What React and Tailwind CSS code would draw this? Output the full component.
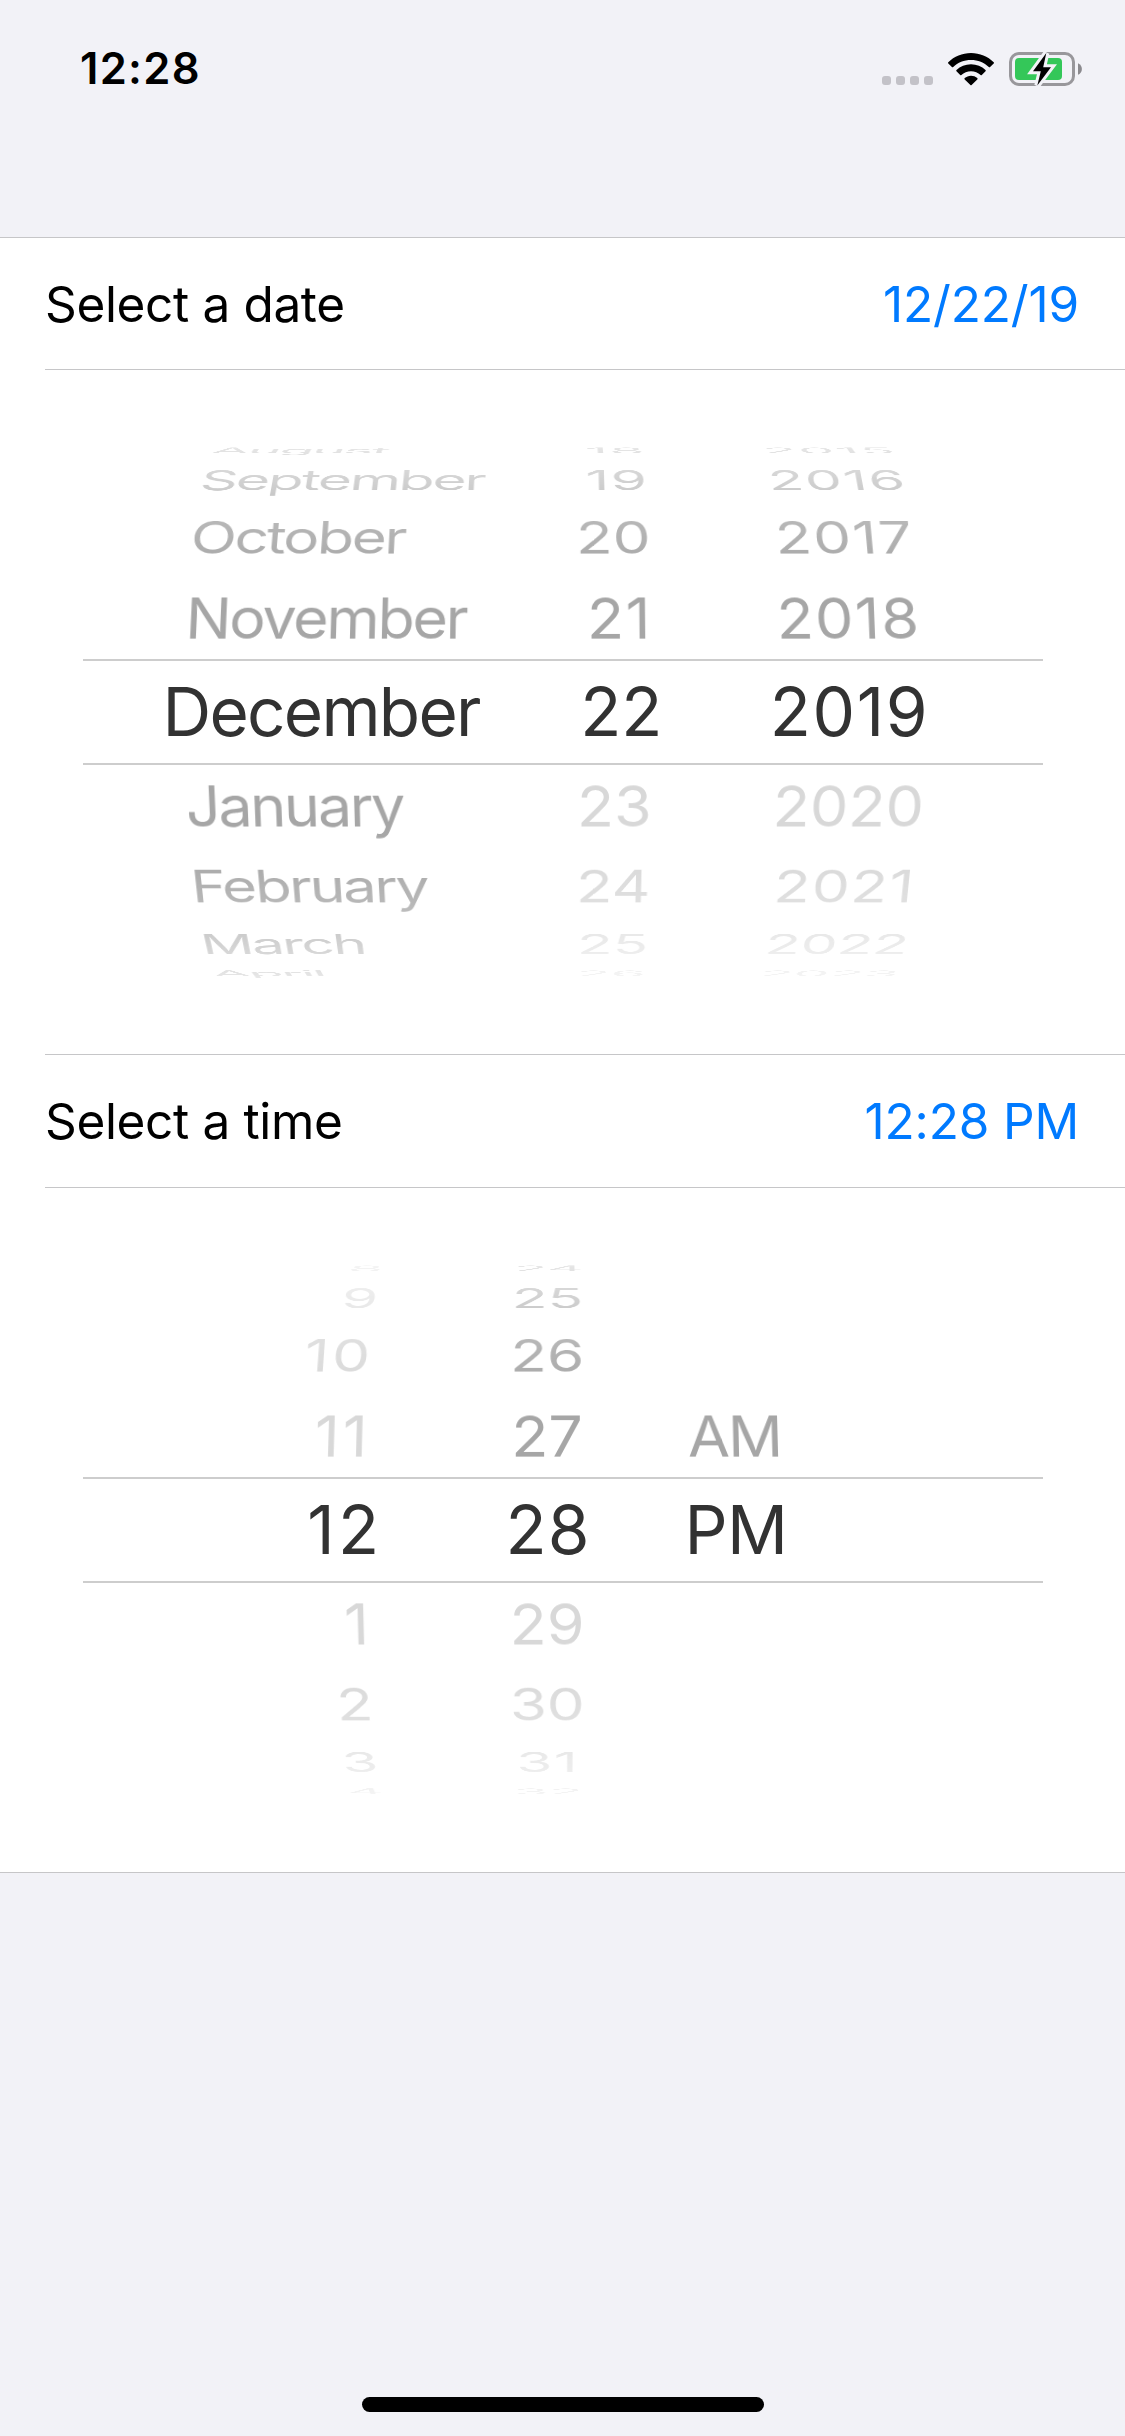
const DATE_COLUMNS = {
  idle: [
    "w-[400px] pl-[102px] text-left tracking-[-0.037em]",
    "w-[169px] text-right",
    "w-[394px] text-center",
  ],
  selected: [
    "w-[400px] pl-[80px] text-left tracking-[-0.026em]",
    "w-[180px] text-right",
    "w-[374px] text-center",
  ],
};

const TIME_COLUMNS = {
  idle: [
    "w-[287px] text-right",
    "ml-[38px] w-[278px] text-center",
    "ml-px w-[200px] pl-[1px] text-left tracking-[-0.03em]",
  ],
  selected: [
    "w-[300px] text-right",
    "ml-[29px] w-[273px] text-center tracking-[0.015em]",
    "w-[200px] text-left tracking-[-0.01em]",
  ],
};

// Projection of a wheel row by its distance from the selected one:
// horizontal scale, vertical scale and perspective strength.
const CURVE = [
  null,
  { x: 0.998, y: 0.935, k: 0.00012, height: "h-[82px]" },
  { x: 0.984, y: 0.743, k: 0.00022, height: "h-[79px]" },
  { x: 0.958, y: 0.462, k: 0.00029, height: "h-[36px]" },
  { x: 0.93, y: 0.135, k: 0.00033, height: "h-[23px]" },
];

// Each row is [offset, cells, muted flags]
const DATE_ROWS = [
  [-4, ["August", "18", "2015"], [0, 0, 0]],
  [-3, ["September", "19", "2016"], [0, 0, 0]],
  [-2, ["October", "20", "2017"], [0, 0, 0]],
  [-1, ["November", "21", "2018"], [0, 0, 0]],
  [0, ["December", "22", "2019"]],
  [1, ["January", "23", "2020"], [0, 1, 1]],
  [2, ["February", "24", "2021"], [0, 1, 1]],
  [3, ["March", "25", "2022"], [0, 1, 1]],
  [4, ["April", "26", "2023"], [0, 1, 1]],
];

const TIME_ROWS = [
  [-4, ["8", "24", ""], [1, 0, 0]],
  [-3, ["9", "25", ""], [1, 0, 0]],
  [-2, ["10", "26", ""], [1, 0, 0]],
  [-1, ["11", "27", "AM"], [1, 0, 0]],
  [0, ["12", "28", "PM"]],
  [1, ["1", "29", ""], [1, 1, 0]],
  [2, ["2", "30", ""], [1, 1, 0]],
  [3, ["3", "31", ""], [1, 1, 0]],
  [4, ["4", "32", ""], [1, 1, 0]],
];

// The narrow "1" needs a little more air around it.
function digitSpacing(cell) {
  if (/^1[0-2]$/.test(cell)) return "tracking-[0.05em]";
  return cell.includes("1") ? "tracking-[0.024em]" : "";
}

function WheelRow({ offset, cells, muted, columns }) {
  if (offset === 0) {
    return (
      <div className="flex h-[106px] shrink-0 items-center border-y-2 border-[#cdcdcd] text-[67.5px] leading-none text-[#323232]">
        {cells.map((cell, i) => (
          <span key={i} className={`shrink-0 ${columns.selected[i]} ${digitSpacing(cell)}`}>
            {cell}
          </span>
        ))}
      </div>
    );
  }
  const { x, y, k, height } = CURVE[Math.abs(offset)];
  const transform = `matrix3d(${x},0,0,0,0,${y},0,${Math.sign(offset) * k},0,0,1,0,0,0,0,1)`;
  return (
    <div
      className={`flex shrink-0 items-center text-[61px] leading-none ${height}`}
      style={{ transform }}
    >
      {cells.map((cell, i) => (
        <span
          key={i}
          className={`shrink-0 ${columns.idle[i]} ${digitSpacing(cell)} ${muted[i] ? "text-[#d8d8d8]" : "text-[#a6a6a6]"}`}
        >
          {cell}
        </span>
      ))}
    </div>
  );
}

function Wheel({ rows, columns }) {
  return (
    <div className="flex h-[684px] flex-col items-center justify-center">
      <div className="flex w-[960px] flex-col whitespace-nowrap py-[10px] [mask-image:linear-gradient(to_bottom,rgba(0,0,0,0.2)_10px,rgba(0,0,0,0.3)_21px,rgba(0,0,0,0.44)_40px,rgba(0,0,0,0.57)_60px,rgba(0,0,0,0.8)_91px,rgba(0,0,0,0.92)_124px,black_165px,black_401px,rgba(0,0,0,0.92)_442px,rgba(0,0,0,0.8)_475px,rgba(0,0,0,0.57)_506px,rgba(0,0,0,0.44)_526px,rgba(0,0,0,0.3)_545px,rgba(0,0,0,0.2)_556px)]">
        {rows.map(([offset, cells, muted]) => (
          <WheelRow key={offset} offset={offset} cells={cells} muted={muted} columns={columns} />
        ))}
      </div>
    </div>
  );
}

function FieldRow({ label, value, className }) {
  return (
    <div
      className={`ml-[45px] flex items-center justify-between border-b border-[#c6c6c8] pr-[46px] pt-[2px] text-[49.5px] leading-none ${className}`}
    >
      <span className="tracking-[-0.007em] text-black">{label}</span>
      <span className="tracking-[-0.003em] text-[#007aff]">{value}</span>
    </div>
  );
}

function StatusBar() {
  return (
    <header className="flex h-[138px] items-center justify-between pl-[80px] pr-[43px]">
      <span className="text-[43.5px] font-semibold leading-none tracking-[0.03em]">12:28</span>
      <div className="flex items-center">
        <div className="mr-[16px] mt-[23px] flex gap-[5px]">
          {[0, 1, 2, 3].map((i) => (
            <span key={i} className="size-[9px] rounded-[3px] bg-[#c3c2c8]" />
          ))}
        </div>
        <svg className="-ml-px mr-[15px] h-[33px] w-[46px]" viewBox="0 0 46 33">
          <path d="M23 0C14.2 0 6.200 3.500.3 9.200a.9.9 0 0 0 0 1.300l3.600 3.500a.9.9 0 0 0 1.300 0C9.800 9.600 16.100 7 23 7s13.200 2.600 17.800 7a.9.900 0 0 0 1.300 0l3.600-3.500a.9.900 0 0 0 0-1.300C39.800 3.500 31.800 0 23 0Z" />
          <path d="M23 11.300c-5.600 0-10.700 2.200-14.500 5.700a.9.900 0 0 0 0 1.300l3.700 3.600a.9.900 0 0 0 1.200 0c2.500-2.300 5.900-3.700 9.600-3.700s7.100 1.400 9.600 3.700a.9.900 0 0 0 1.200 0l3.700-3.600a.9.900 0 0 0 0-1.300c-3.800-3.500-8.900-5.700-14.500-5.700Z" />
          <path d="M23 22.700c-2.400 0-4.600.9-6.300 2.400a.9.900 0 0 0 0 1.300l5.700 5.700a.9.900 0 0 0 1.200 0l5.700-5.700a.9.900 0 0 0 0-1.300A9.400 9.400 0 0 0 23 22.700Z" />
        </svg>
        <svg className="h-[34px] w-[73px]" viewBox="0 0 73 34">
          <rect x="1.500" y="1.500" width="63" height="31" rx="8.500" fill="none" stroke="#98979b" strokeWidth="3" />
          <path d="M69 11.200c2.300.9 3.900 3.200 3.900 5.800s-1.600 4.900-3.900 5.800Z" fill="#8b8a8e" />
          <rect x="6" y="6" width="47" height="22" rx="4" fill="#34c759" />
          <path d="M37.300 1 24 19.200h7.800L28.300 33.500 42 15.200h-7.800Z" fill="#000" stroke="#f2f2f7" strokeWidth="6" strokeLinejoin="miter" paintOrder="stroke" />
        </svg>
      </div>
    </header>
  );
}

export default function App() {
  return (
    <div className="flex h-[2436px] w-[1125px] flex-col overflow-hidden bg-[#f2f2f7] font-['Inter','Liberation_Sans',sans-serif] text-black">
      <StatusBar />
      <main className="mt-[99px] border-y border-[#c6c6c8] bg-white">
        <FieldRow label="Select a date" value="12/22/19" className="h-[132px]" />
        <Wheel rows={DATE_ROWS} columns={DATE_COLUMNS} />
        <div className="ml-[45px] h-px bg-[#c6c6c8]" />
        <FieldRow label="Select a time" value="12:28 PM" className="h-[133px]" />
        <Wheel rows={TIME_ROWS} columns={TIME_COLUMNS} />
      </main>
      <div className="mx-auto mb-[24px] mt-auto h-[15px] w-[402px] rounded-full bg-black" />
    </div>
  );
}
